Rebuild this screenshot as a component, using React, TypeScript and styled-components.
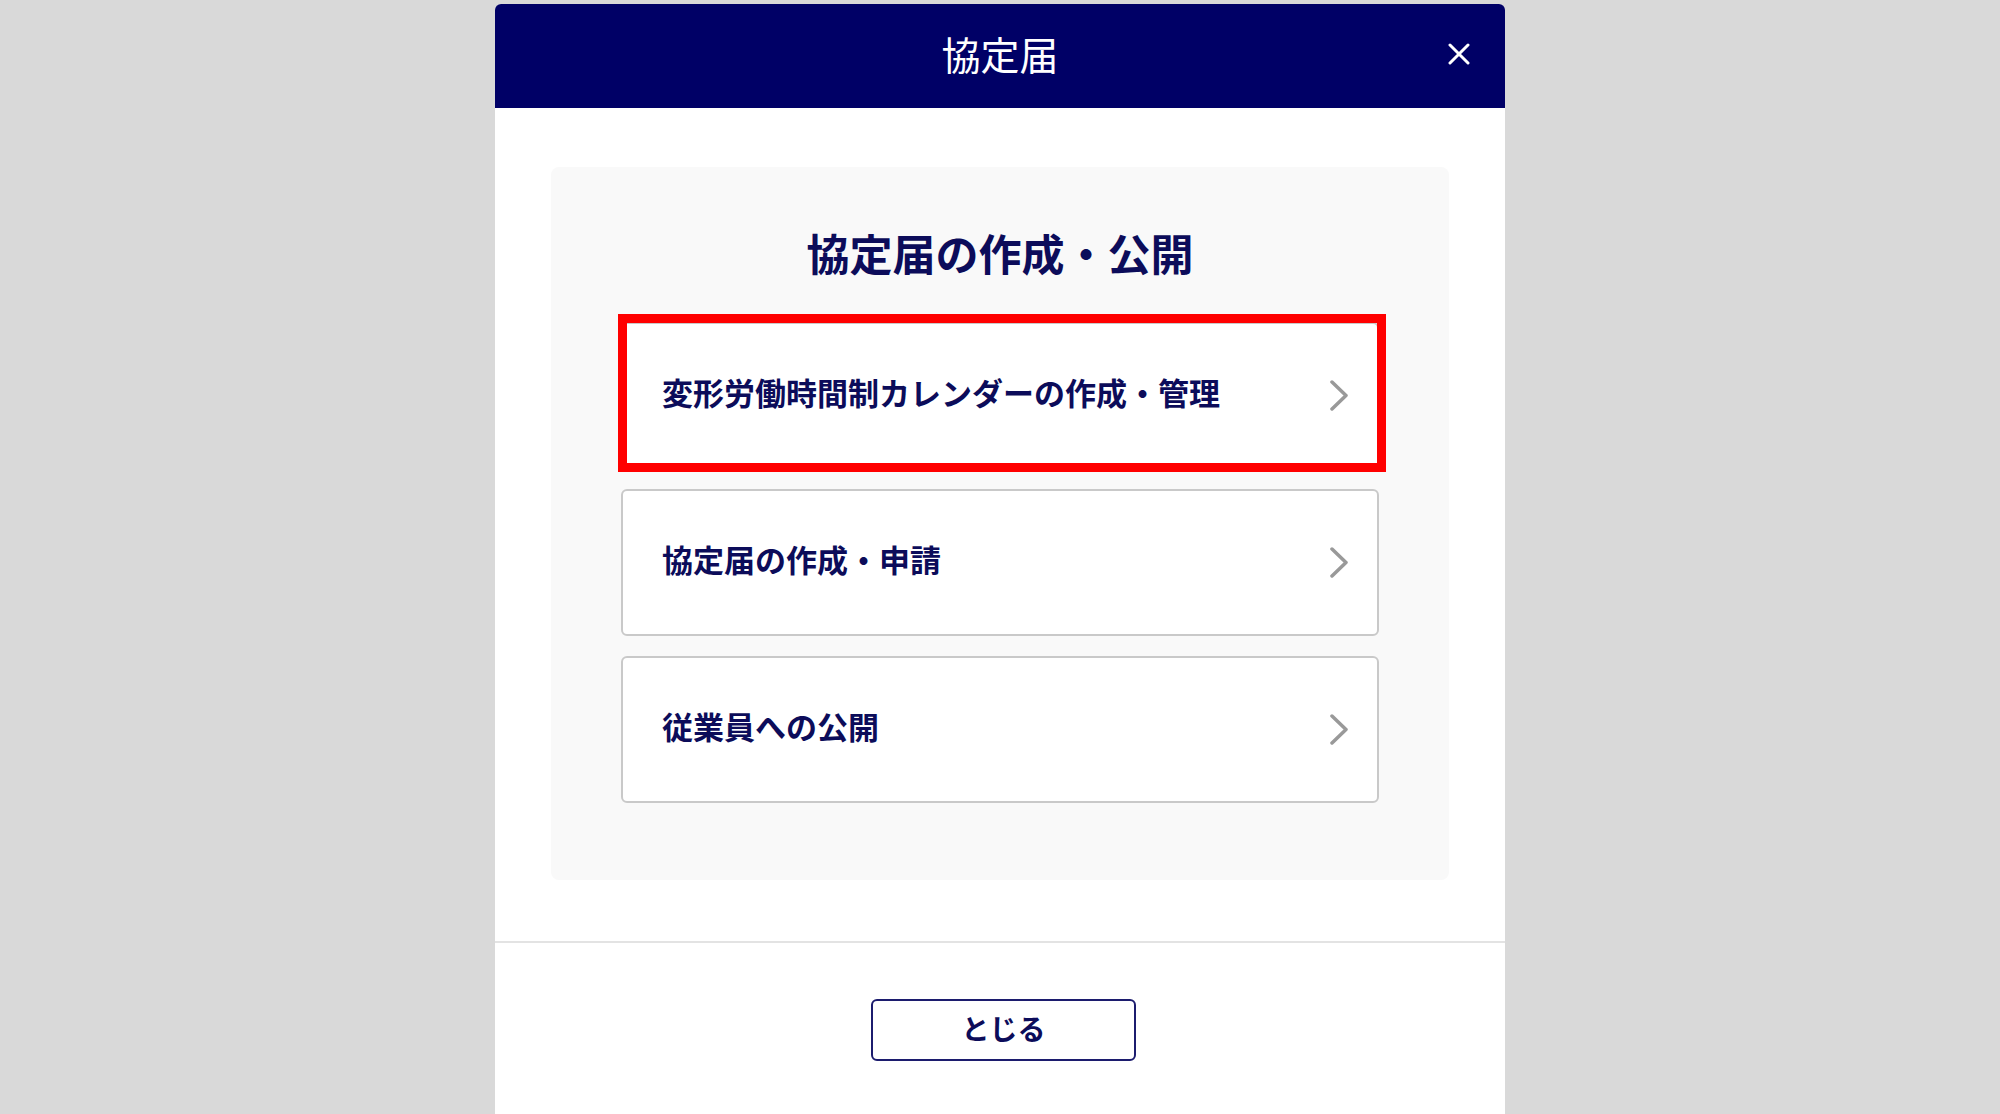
import styled, { createGlobalStyle } from 'styled-components'

const NAVY = '#000066'
const TEXT_NAVY = '#0c0c5a'

const GlobalStyle = createGlobalStyle`
  html, body {
    margin: 0;
    padding: 0;
  }
  body {
    background: #d9d9d9;
    font-family: "Noto Sans CJK JP", "Noto Sans", sans-serif;
    overflow: hidden;
  }
`

const items = [
  { label: '変形労働時間制カレンダーの作成・管理', highlighted: true },
  { label: '協定届の作成・申請', highlighted: false },
  { label: '従業員への公開', highlighted: false },
]

const App = () => {
  return (
    <>
      <GlobalStyle />
      <Page>
        <Modal>
          <Header>
            <span />
            <HeaderTitle>協定届</HeaderTitle>
            <CloseButton aria-label="close">
              <svg width="22" height="22" viewBox="0 0 22 22">
                <path d="M2 2 L20 20 M20 2 L2 20" stroke="#fff" strokeWidth="3" strokeLinecap="round" />
              </svg>
            </CloseButton>
          </Header>
          <Body>
            <Panel>
              <PanelTitle>協定届の作成・公開</PanelTitle>
              <ItemList>
                {items.map((item) => (
                  <Item key={item.label} $highlighted={item.highlighted}>
                    <ItemLabel>{item.label}</ItemLabel>
                    <svg width="20" height="31" viewBox="0 0 20 31">
                      <polyline
                        points="3,2 17,15.5 3,29"
                        fill="none"
                        stroke="#999"
                        strokeWidth="3.5"
                        strokeLinecap="round"
                        strokeLinejoin="round"
                      />
                    </svg>
                  </Item>
                ))}
              </ItemList>
            </Panel>
          </Body>
          <Footer>
            <CloseTextButton>とじる</CloseTextButton>
          </Footer>
        </Modal>
      </Page>
    </>
  )
}

const Page = styled.div`
  height: 1114px;
  display: flex;
  justify-content: center;
  padding-top: 4px;
  box-sizing: border-box;
  overflow: hidden;
`

const Modal = styled.div`
  width: 1010px;
  flex-shrink: 0;
  height: 1200px;
  background: #fff;
  border-radius: 6px 6px 0 0;
  display: flex;
  flex-direction: column;
  overflow: hidden;
`

const Header = styled.div`
  height: 104px;
  background: ${NAVY};
  display: grid;
  grid-template-columns: 1fr auto 1fr;
  align-items: center;
  padding: 0 35px;
  box-sizing: border-box;
`

const HeaderTitle = styled.h1`
  margin: 0;
  color: #fff;
  font-size: 39px;
  font-weight: 400;
  line-height: 1;
  padding-bottom: 6px;
`

const CloseButton = styled.button`
  justify-self: end;
  border: none;
  background: none;
  padding: 0;
  width: 22px;
  height: 22px;
  display: flex;
  cursor: pointer;
  margin-top: -4px;
`

const Body = styled.div`
  padding: 59px 56px 61px;
`

const Panel = styled.div`
  background: #f9f9f9;
  border-radius: 8px;
  padding: 58px 70px 77px;
`

const PanelTitle = styled.h2`
  margin: 0 0 37px;
  padding-bottom: 5px;
  height: 55px;
  text-align: center;
  font-size: 43px;
  line-height: 55px;
  font-weight: 700;
  color: ${TEXT_NAVY};
`

const ItemList = styled.div`
  display: flex;
  flex-direction: column;
  gap: 20px;
`

const Item = styled.div<{ $highlighted: boolean }>`
  position: relative;
  height: 147px;
  box-sizing: border-box;
  background: #fff;
  border: 2px solid #c9c9c9;
  border-radius: 6px;
  display: flex;
  align-items: center;
  justify-content: space-between;
  padding: 0 28px 0 39px;
  cursor: pointer;

  &::after {
    content: '';
    display: ${(p) => (p.$highlighted ? 'block' : 'none')};
    position: absolute;
    inset: -10px -9px -5px -5px;
    border: 9px solid #ff0000;
    pointer-events: none;
  }
`

const ItemLabel = styled.span`
  font-size: 31px;
  font-weight: 700;
  color: ${TEXT_NAVY};
  line-height: 1;
  padding-bottom: 8px;
`

const Footer = styled.div`
  border-top: 2px solid #e3e3e3;
  padding: 56px 0 0 7px;
  display: flex;
  justify-content: center;
`

const CloseTextButton = styled.button`
  width: 265px;
  height: 62px;
  box-sizing: border-box;
  background: #fff;
  border: 2px solid #1c1c6e;
  border-radius: 6px;
  font-family: "Noto Sans CJK JP", "Noto Sans", sans-serif;
  font-size: 28px;
  font-weight: 700;
  color: ${TEXT_NAVY};
  padding: 0 0 5px;
  cursor: pointer;
`

export default App
